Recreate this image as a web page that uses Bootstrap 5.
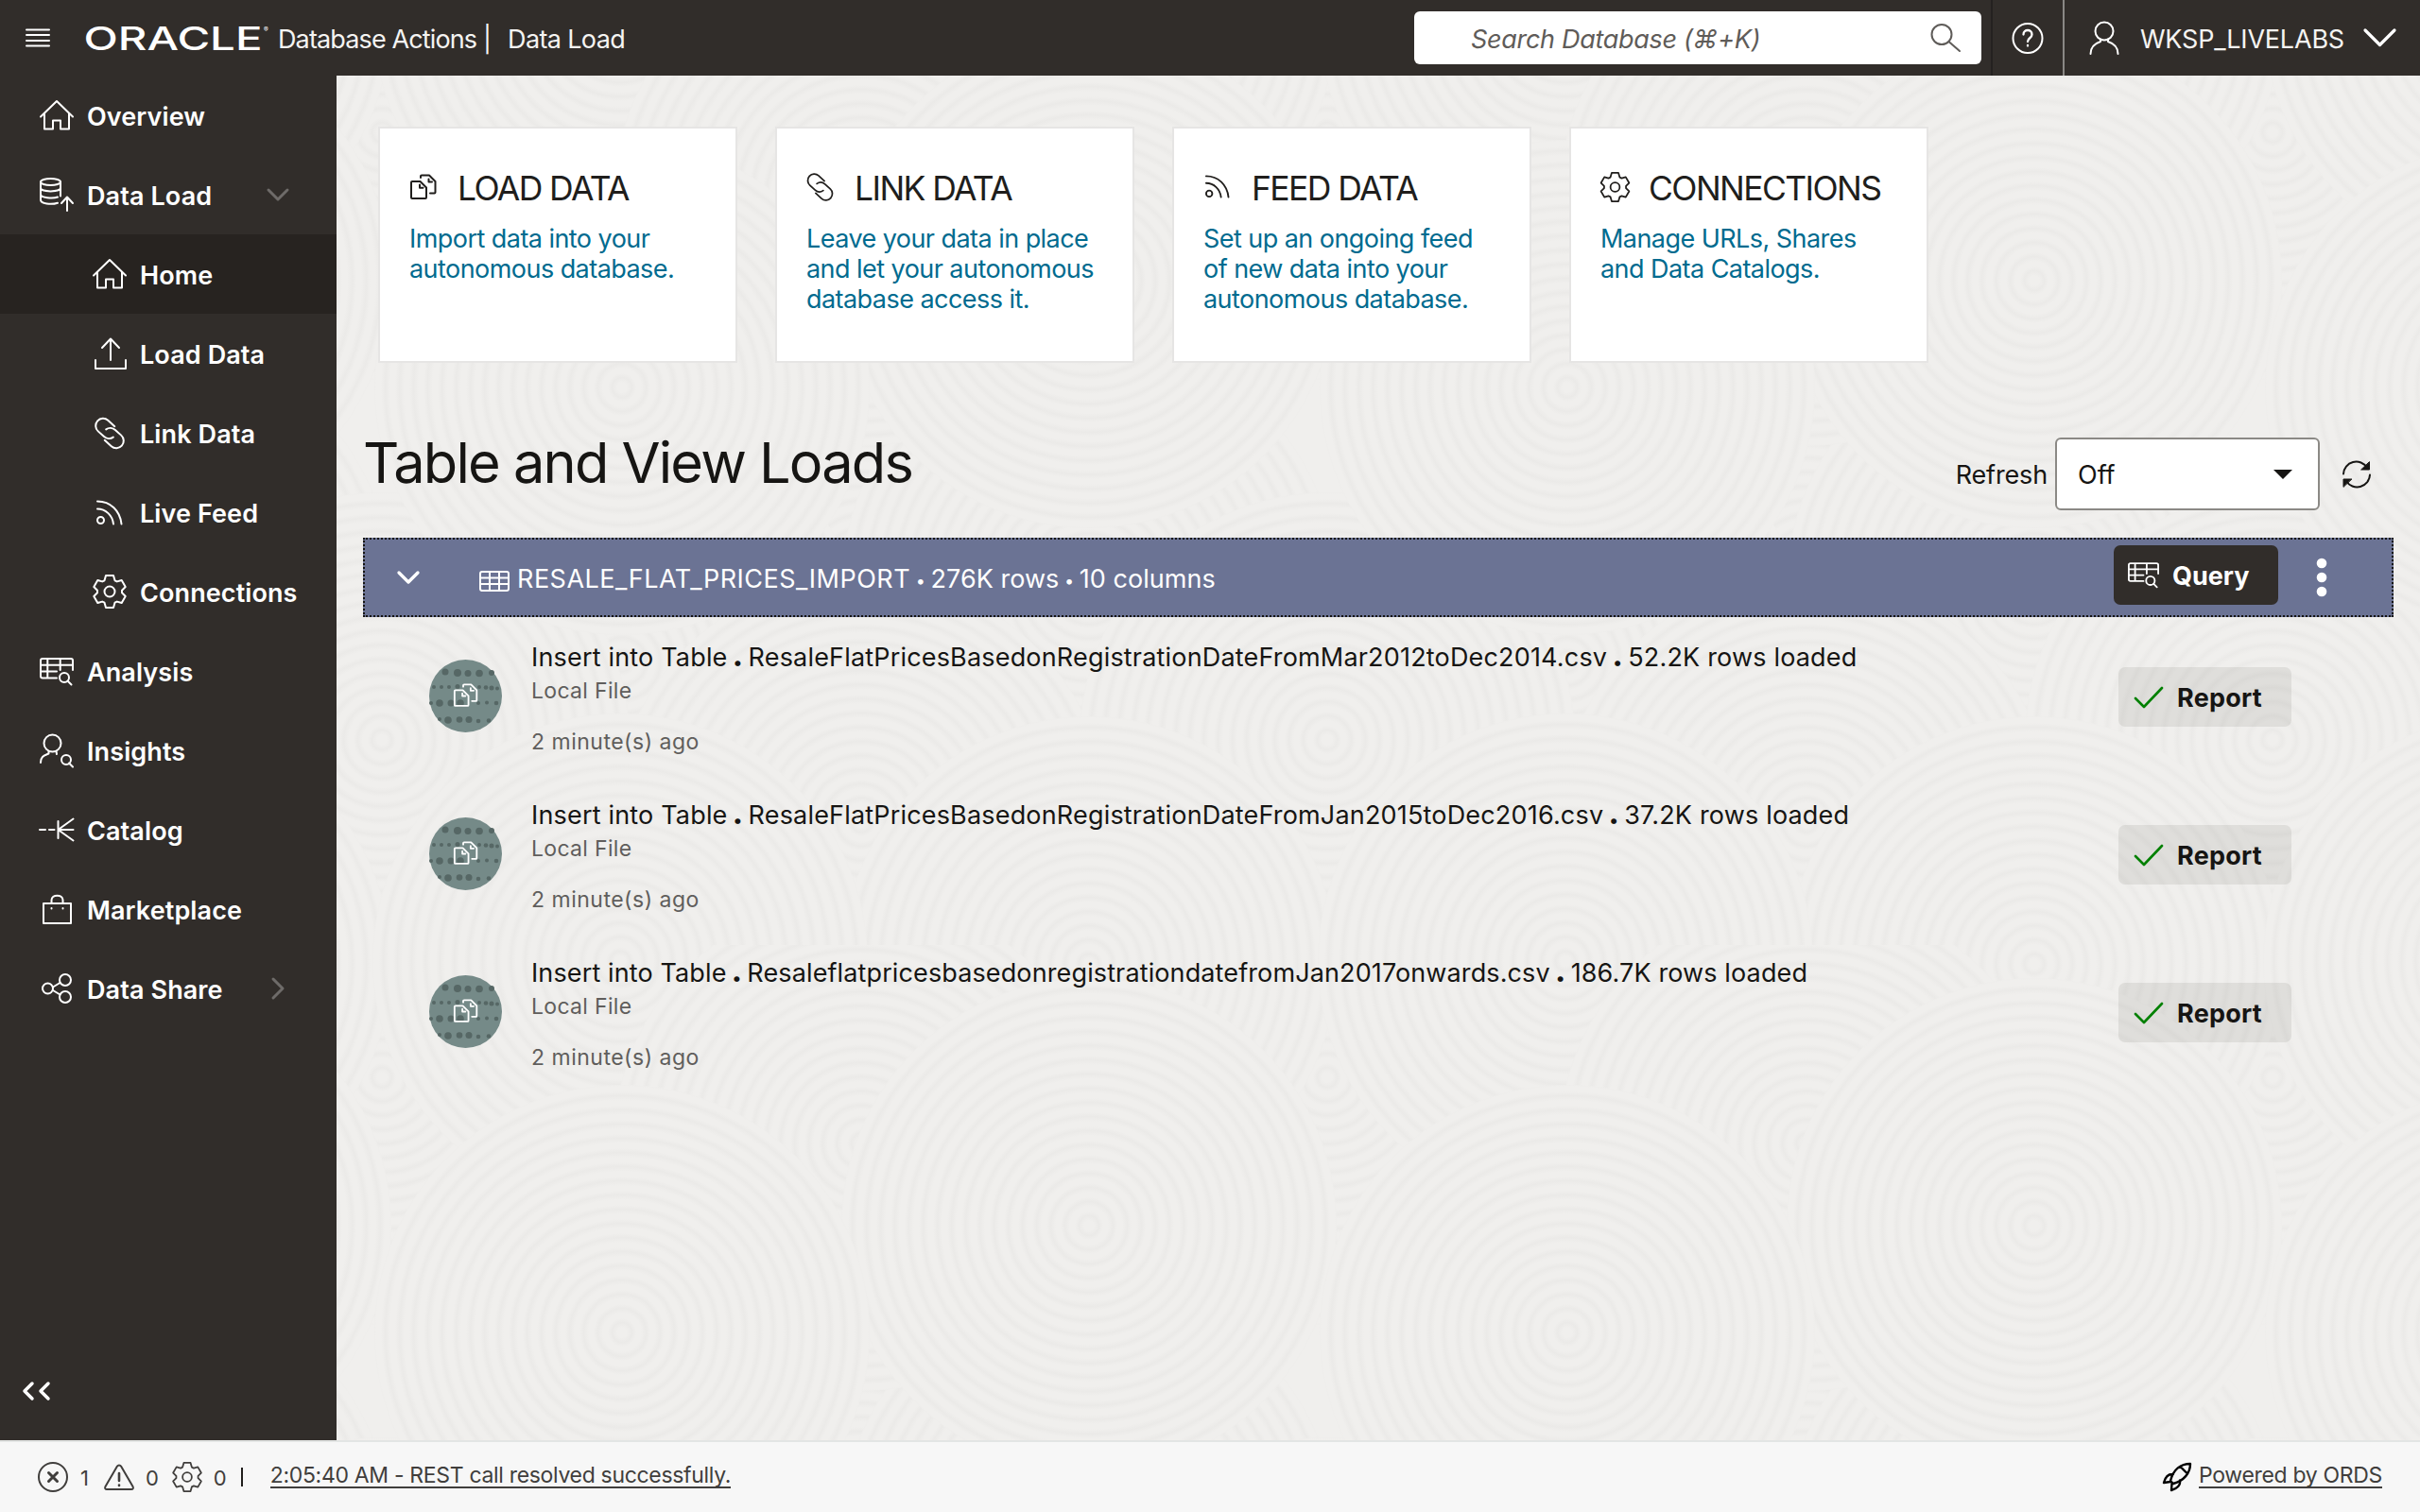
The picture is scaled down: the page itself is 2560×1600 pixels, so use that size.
<!DOCTYPE html>
<html lang="en">
<head>
<meta charset="utf-8">
<title>Oracle Database Actions | Data Load</title>
<link href="https://cdn.jsdelivr.net/npm/bootstrap@5.3.0/dist/css/bootstrap.min.css" rel="stylesheet">
<style>
html,body{height:100%}
body{font-family:Inter,"Noto Sans",sans-serif;font-size:27px;line-height:32px;color:#161513;background:#f0efed;overflow:hidden}
svg.ico{fill:none;stroke:currentColor;stroke-width:2;stroke-linecap:round;stroke-linejoin:round;overflow:visible;flex:none;display:block}
.topbar{height:80px;background:#312d2a;color:#fff;padding-left:28px}
.topbar .t{padding-top:4px;white-space:nowrap;color:#f5f4f2}
.topbar .product{margin-left:38px;letter-spacing:-.87px}
.topbar .section-name{margin-left:18px;letter-spacing:-.64px}
.topbar .user-ico{margin-left:26px}
.topbar .user-name{margin-left:22px;letter-spacing:-.19px}
.topbar .user-chev{margin:0 25px 0 20px}
.wordmark{fill:#fff!important;stroke:none!important}
.searchbox{width:600px;height:56px;border-radius:6px;background:#fff;color:#5f5c59;font-style:italic;padding:0 22px 0 60px;margin-right:10px;letter-spacing:-.3px}
.searchbox span{padding-top:3px}
.helpcell{width:78px;border-left:2px solid #242120;border-right:2px solid #8a8885}
.side{width:356px;background:#312d2a;color:#fff;font-weight:600}
.side a{height:84px;padding-left:42px;color:#fff;text-decoration:none;white-space:nowrap;padding-top:4px}
.side a svg.ico{width:36px;margin-top:-4px}
.side a .t{margin-left:14px;letter-spacing:.1px}
.side a.lvl2{padding-left:98px}
.side a.on{background:#272320}
.side .chev{margin-left:auto;margin-right:50px;color:#6e6b69;width:auto!important}
.side .chev.closed{margin-right:55px}
.side .collapser{height:84px;padding-left:23px;margin-bottom:10px}
.work{background:#f0efed;position:relative;z-index:0}
.swirl{position:absolute;inset:0;width:100%;height:100%;z-index:-1}
.tiles{gap:40px;padding:54px 0 0 44px}
.tile{width:380px;height:250px;border:2px solid #e6e5e4;border-radius:0;background:#fff;padding:45px 0 0 31px}
.tile h2{font-size:35.5px;line-height:38px;font-weight:400;color:#201e1c;margin:0;white-space:nowrap;letter-spacing:-1.6px}
.tile h2 svg{margin-right:22px;margin-top:-5px;width:29px}
.tile p{color:#006b8f;margin:18px 0 0;white-space:nowrap;letter-spacing:-.55px}
.headrow{padding:79px 52px 0 28px;height:185px}
.headrow h1{font-size:59.5px;line-height:64px;font-weight:400;margin:-6px 0 0;white-space:nowrap;letter-spacing:-1.8px}
.pick{width:280px;height:77px;border:2px solid #8b8985;border-radius:6px;background:#fff;padding:0 27px 0 22px;margin:0 24px 0 8px}
.pick span,.headrow .lbl{padding-top:2px}
.headrow .lbl{letter-spacing:-.15px}
.group-bar{height:84px;margin:0 28px;background:#6b7394;border:2px dotted #161513;color:#fff;padding-left:34px}
.group-bar .table-ico{margin:7px 8px 0 63px}
.group-bar .kebab{margin:0 68px 0 40px}
.group-name{padding-top:5px;letter-spacing:.03px}
.group-name b{font-weight:400;letter-spacing:.5px}
.group-name i{font-style:normal;font-size:18px;vertical-align:1px;margin:0 -2px}
.btn-q{width:174px;height:63px;background:#312d2a;color:#fff;border-radius:7px;font-size:27px;font-weight:700;padding:0 0 0 15px;margin-bottom:5px;border:0}
.btn-q svg{margin-right:14px}
.btn-q span{padding-top:3px}
.btn-r span{padding-top:4px}
.btn-r{width:183px;height:63px;background:rgba(22,21,19,.08);color:#161513;border-radius:7px;font-size:27px;font-weight:700;padding:0 0 0 16px;margin:27px 0 0 auto;border:0;letter-spacing:.25px}
.btn-r svg{margin-right:14px}
.btn-r svg.ico{color:#008000}
.loadrow{height:167px;padding:26px 136px 0 98px}
.avatar{width:77px;height:77px;margin:19px 31px 0 0;flex:none}
.loadrow .ln{white-space:nowrap;letter-spacing:.18px;margin-top:1px}
.loadrow .ln.lower{letter-spacing:.12px}
.sub{font-size:23px;color:#605e5c;line-height:28px;letter-spacing:.32px;margin-top:5px}
.sub.when{letter-spacing:.5px;margin-top:26px}
.dotsep{font-weight:800;font-size:32px;line-height:20px;margin:0 -2.500px}
.foot{height:76px;background:#f7f7f7;border-top:2px solid #e3e5e4;color:#403e3c;font-size:22px;padding:0 40px;white-space:nowrap}
.foot .count{margin:2px 14px 0 13px}
.foot .count.first{margin-right:16px}
.foot .count.last{margin:2px 14px 0 12px}
.foot .bar{margin-left:1px;width:2px;height:20px;background:#201e1c}
.foot a{font-size:23px;color:#403e3c;border-bottom:2px solid #403e3c;line-height:23px;text-decoration:none;letter-spacing:-.32px;margin-top:-1px}
.foot .status{margin-left:29px}
.foot .rocket{color:#000;margin-right:8px}
</style>
<script src="https://cdn.jsdelivr.net/npm/bootstrap@5.3.0/dist/js/bootstrap.bundle.min.js"></script>
</head>
<body class="d-flex flex-column">
<svg width="0" height="0" class="position-absolute">
<defs>
<symbol id="house" viewBox="0 0 36 32" overflow="visible"><path d="M1 17.500 18 1l17 16.500M5 14v16.500h9V21.500h8v9h9V14"/></symbol>
<symbol id="files" viewBox="0 0 29 28" overflow="visible"><path d="M3 8h8.500L18 14.500V25a1 1 0 0 1-1 1H3a1 1 0 0 1-1-1V9a1 1 0 0 1 1-1zM11 11.500v3.200h3.500M12 4V2.500a1 1 0 0 1 1-1h8l6.500 6.500v11.500a1 1 0 0 1-1 1H22M20.500 5.500v3H24"/></symbol>
<symbol id="chain" viewBox="0 0 33 31" overflow="visible"><path transform="rotate(42 16.500 15.500)" d="M15.500 6.500h-9.500a7.800 7.800 0 0 0 0 15.600h8.500a7.800 7.800 0 0 0 7.600-6.100M17.500 24.500h9.500a7.800 7.800 0 0 0 0-15.600h-8.500a7.800 7.800 0 0 0-7.600 6.100"/></symbol>
<symbol id="feed" viewBox="0 0 29 27" overflow="visible"><circle cx="5.500" cy="21.500" r="3.500"/><path d="M2 9.500c9 0 16 7 17 16M2 1.500c14 0 24 10 25.500 24"/></symbol>
<symbol id="gear" viewBox="-18 -18 36 36" overflow="visible"><path d="M-5.500-11.700-4-17H4L5.500-11.700 7.800-10.600 12.700-12 16.700-5 13-1.300V1.300L16.700 5 12.700 12 7.800 10.600 5.500 11.700 4 17H-4L-5.500 11.700-7.800 10.600-12.700 12-16.700 5-13 1.300V-1.300L-16.700-5-12.700-12-7.800-10.600z"/><circle r="5.500"/></symbol>
<symbol id="tblfind" viewBox="0 0 36 29" overflow="visible"><path d="M18 21.500H3a2 2 0 0 1-2-2V3a2 2 0 0 1 2-2h30a2 2 0 0 1 2 2v10M1 7.800h34M1 14.600h17M8.300 1v20.500M21.700 1v12M29.500 24.500l4 4"/><circle cx="26" cy="21" r="5"/></symbol>
<radialGradient id="rings" gradientUnits="userSpaceOnUse" cx="0" cy="0" r="15" spreadMethod="repeat"><stop offset="0" stop-color="#f0efed"/><stop offset=".35" stop-color="#f0efed"/><stop offset=".7" stop-color="#ebeae8"/><stop offset="1" stop-color="#f0efed"/></radialGradient>
<symbol id="disc" overflow="visible"><circle r="262" fill="url(#rings)"/></symbol>
<pattern id="swirls" width="1000" height="1000" patternUnits="userSpaceOnUse" x="-356" y="-80">
<rect width="1000" height="1000" fill="#f0efed"/>
<use href="#disc" x="404" y="140"/><use href="#disc" x="404" y="1140"/><use href="#disc" x="911" y="600"/><use href="#disc" x="-89" y="600"/><use href="#disc" x="152" y="620"/><use href="#disc" x="1152" y="620"/><use href="#disc" x="658" y="700"/><use href="#disc" x="911" y="870"/><use href="#disc" x="-89" y="870"/><use href="#disc" x="911" y="-130"/><use href="#disc" x="-89" y="-130"/><use href="#disc" x="404" y="783"/><use href="#disc" x="404" y="-217"/><use href="#disc" x="152" y="20"/><use href="#disc" x="1152" y="20"/><use href="#disc" x="152" y="1020"/><use href="#disc" x="1152" y="1020"/><use href="#disc" x="656" y="17"/><use href="#disc" x="656" y="1017"/><use href="#disc" x="911" y="210"/><use href="#disc" x="-89" y="210"/><use href="#disc" x="152" y="297"/><use href="#disc" x="1152" y="297"/><use href="#disc" x="658" y="410"/>
</pattern>
<symbol id="loadbadge" viewBox="0 0 77 77"><circle cx="38.500" cy="38.500" r="38.500" fill="#758a88"/>
<g fill="#566765" stroke="none"><circle cx="17" cy="13" r="3.500"/><circle cx="30" cy="14" r="4"/><circle cx="41" cy="14.500" r="3.500"/><circle cx="53" cy="14.500" r="3.800"/><circle cx="66" cy="14" r="3"/><circle cx="5" cy="29" r="2"/><circle cx="13" cy="29" r="2"/><circle cx="21" cy="29" r="2"/><circle cx="30" cy="28.500" r="2.500"/><circle cx="53" cy="29" r="2"/><circle cx="60" cy="29.500" r="2.300"/><circle cx="66" cy="30" r="2.500"/><circle cx="72" cy="30.500" r="2"/><circle cx="2" cy="46" r="2"/><circle cx="11" cy="46" r="3.800"/><circle cx="23" cy="46" r="3.500"/><circle cx="33" cy="46" r="3.800"/><circle cx="52" cy="46" r="2"/><circle cx="61" cy="45.500" r="2"/><circle cx="71" cy="46" r="2.300"/><circle cx="11" cy="63" r="2"/><circle cx="20" cy="64" r="3.800"/><circle cx="32" cy="63.500" r="3.300"/><circle cx="42" cy="63.500" r="3.500"/><circle cx="52" cy="65" r="2.300"/><circle cx="63" cy="64.500" r="2.300"/></g>
<g fill="none" stroke="#fff" stroke-width="2" stroke-linejoin="round" stroke-linecap="round" transform="translate(25 25) scale(.92)"><path d="M3 8h8.500L18 14.500V25a1 1 0 0 1-1 1H3a1 1 0 0 1-1-1V9a1 1 0 0 1 1-1zM11 11.500v3.200h3.500M12 4V2.500a1 1 0 0 1 1-1h8l6.500 6.500v11.500a1 1 0 0 1-1 1H22M20.500 5.500v3H24"/></g></symbol>
</defs>
</svg>

<header class="topbar d-flex align-items-center flex-shrink-0">
<svg class="ico" width="24" height="20"><path d="M0 1.500h24M0 7h24M0 13h24M0 18.500h24"/></svg>
<svg class="ico wordmark" width="204" height="80"><g font-family="Inter,sans-serif"><text x="36.500" y="53" font-size="34.500" font-weight="500" textLength="189" lengthAdjust="spacingAndGlyphs">ORACLE</text><text x="227" y="34" font-size="7">®</text></g></svg>
<span class="t product">Database Actions |</span>
<span class="t section-name">Data Load</span>
<div class="searchbox d-flex align-items-center justify-content-between ms-auto"><span>Search Database (⌘+K)</span><svg class="ico" width="32" height="30"><circle cx="12" cy="11.500" r="10.500"/><path d="M19.500 19 31 29"/></svg></div>
<div class="helpcell h-100 d-flex align-items-center justify-content-center"><svg class="ico" width="34" height="34"><circle cx="17" cy="17.500" r="15.500"/><path d="M12.500 13.500c0-6 9-6 9 0 0 4-4.500 3.500-4.500 7.500M17 25v.5" stroke-width="2.300"/></svg></div>
<svg class="ico user-ico" width="32" height="36"><circle cx="16" cy="11" r="9.500"/><path d="M12 19.500v2.500C6 24 1.500 28 1.500 35M20 19.500v2.500c6 2 10.500 6 10.500 13"/></svg>
<span class="t user-name">WKSP_LIVELABS</span>
<svg class="ico user-chev" width="35" height="20"><path stroke-width="3.200" d="M2 2l15.500 15.500L33 2"/></svg>
</header>

<div class="d-flex flex-grow-1" style="min-height:0">
<nav class="side d-flex flex-column flex-shrink-0">
<a href="#" class="d-flex align-items-center"><svg class="ico" height="32"><use href="#house"/></svg><span class="t">Overview</span></a>
<a href="#" class="d-flex align-items-center"><svg class="ico" height="36"><ellipse cx="11.500" cy="4.500" rx="10.500" ry="3.500"/><path d="M1 4.500v19c0 4 11 5.500 18 3.200M22 4.500v15M1 11c0 4.500 21 4.500 21 0M1 17.500c0 4 13 5 18 3M29 35V21M23 27l6-6.500 6 6.500"/></svg><span class="t">Data Load</span><svg class="ico chev" width="24" height="14"><path stroke-width="3" d="M2 2l10 10L22 2"/></svg></a>
<a href="#" class="d-flex align-items-center lvl2 on"><svg class="ico" height="32"><use href="#house"/></svg><span class="t">Home</span></a>
<a href="#" class="d-flex align-items-center lvl2"><svg class="ico" height="34"><path d="M19 24V2M10 11l9-9.500 9 9.500M3 24v9h32v-9"/></svg><span class="t">Load Data</span></a>
<a href="#" class="d-flex align-items-center lvl2"><svg class="ico" height="31"><use href="#chain" width="33" height="31" x="1.500"/></svg><span class="t">Link Data</span></a>
<a href="#" class="d-flex align-items-center lvl2"><svg class="ico" height="27"><use href="#feed" width="29" height="27" x="3"/></svg><span class="t">Live Feed</span></a>
<a href="#" class="d-flex align-items-center lvl2"><svg class="ico" height="36"><use href="#gear"/></svg><span class="t">Connections</span></a>
<a href="#" class="d-flex align-items-center"><svg class="ico" height="29"><use href="#tblfind"/></svg><span class="t">Analysis</span></a>
<a href="#" class="d-flex align-items-center"><svg class="ico" height="36"><circle cx="13.500" cy="10.500" r="9"/><path d="M17.500 19l.500 3M9.500 19v2.500C5 23.500 1 24 1 31M31 31.500l4 4"/><circle cx="28" cy="28" r="5"/></svg><span class="t">Insights</span></a>
<a href="#" class="d-flex align-items-center"><svg class="ico" height="26"><path d="M0 13h6M10 13h5.500M19.500 4v18M19.500 13H35.500M19.500 13 35.500 1.500M19.500 13l16 11.500"/></svg><span class="t">Catalog</span></a>
<a href="#" class="d-flex align-items-center"><svg class="ico" height="32"><path d="M4 10h29v21H4zM12.500 10V6.500c0-6.500 12-6.500 12 0V10M12.500 15v.500M24.500 15v.500"/></svg><span class="t">Marketplace</span></a>
<a href="#" class="d-flex align-items-center"><svg class="ico" height="32"><circle cx="8.500" cy="16" r="5.500"/><circle cx="27" cy="7" r="6"/><circle cx="27" cy="25" r="6"/><path d="M14 14.500l7.500-4.500M14 18l7.500 4.500"/></svg><span class="t">Data Share</span><svg class="ico chev closed" width="14" height="24"><path stroke-width="3" d="M2 2l10 10L2 22"/></svg></a>
<div class="collapser mt-auto d-flex align-items-center"><svg class="ico" width="30" height="20"><path stroke-width="3.500" d="M11 2 3 10l8 8M28 2l-8 8 8 8"/></svg></div>
</nav>

<main class="work flex-grow-1">
<svg class="swirl"><rect width="100%" height="100%" fill="url(#swirls)"/></svg>
<section class="tiles d-flex">
<div class="card tile"><h2 class="d-flex align-items-center"><svg class="ico" height="28"><use href="#files"/></svg><span>LOAD DATA</span></h2><p>Import data into your<br>autonomous database.</p></div>
<div class="card tile"><h2 class="d-flex align-items-center"><svg class="ico" height="28"><use href="#chain"/></svg><span>LINK DATA</span></h2><p>Leave your data in place<br>and let your autonomous<br>database access it.</p></div>
<div class="card tile"><h2 class="d-flex align-items-center"><svg class="ico" height="25"><use href="#feed"/></svg><span>FEED DATA</span></h2><p>Set up an ongoing feed<br>of new data into your<br>autonomous database.</p></div>
<div class="card tile"><h2 class="d-flex align-items-center"><svg class="ico" height="32"><use href="#gear" x="-1" width="33" height="32"/></svg><span>CONNECTIONS</span></h2><p>Manage URLs, Shares<br>and Data Catalogs.</p></div>
</section>
<section class="headrow d-flex align-items-start">
<h1 class="me-auto">Table and View Loads</h1>
<div class="d-flex align-items-center"><span class="lbl">Refresh</span>
<div class="pick d-flex align-items-center justify-content-between"><span>Off</span><svg width="20" height="10"><path d="M0 0h20L10 10z" fill="#161513"/></svg></div>
<svg class="ico" width="30" height="30"><path d="M1 14.500A13.500 13.500 0 0 1 26 8M29 15.500A13.500 13.500 0 0 1 4 22"/><path fill="#161513" stroke-width="1" d="M28.500 2v8H20zM1 28v-8h8.500z"/></svg></div>
</section>
<section class="group-bar d-flex align-items-center">
<svg class="ico" width="24" height="14"><path stroke-width="3.300" d="M2 2l10 10L22 2"/></svg>
<svg class="ico table-ico" width="32" height="22"><rect x="1" y="1" width="30" height="20" rx="2"/><path d="M1 7.500h30M1 14h30M11 1v20M21 1v20"/></svg>
<span class="me-auto group-name"><b>RESALE_FLAT_PRICES_IMPORT</b> <i>•</i> 276K rows <i>•</i> 10 columns</span>
<button class="btn btn-q d-flex align-items-center"><svg class="ico" width="33" height="27"><use href="#tblfind"/></svg><span>Query</span></button>
<svg class="kebab" width="12" height="44" fill="#fff"><circle cx="6" cy="7" r="5.300"/><circle cx="6" cy="22" r="5.300"/><circle cx="6" cy="37" r="5.300"/></svg>
</section>
<article class="loadrow d-flex align-items-start"><svg class="avatar"><use href="#loadbadge"/></svg><div><div class="ln">Insert into Table <span class="dotsep">.</span> ResaleFlatPricesBasedonRegistrationDateFromMar2012toDec2014.csv <span class="dotsep">.</span> 52.2K rows loaded</div><div class="sub">Local File</div><div class="sub when">2 minute(s) ago</div></div>
<button class="btn btn-r d-flex align-items-center"><svg class="ico" width="32" height="24"><path stroke-width="2.600" d="M2 13l9 9L30 2"/></svg><span>Report</span></button></article>
<article class="loadrow d-flex align-items-start"><svg class="avatar"><use href="#loadbadge"/></svg><div><div class="ln">Insert into Table <span class="dotsep">.</span> ResaleFlatPricesBasedonRegistrationDateFromJan2015toDec2016.csv <span class="dotsep">.</span> 37.2K rows loaded</div><div class="sub">Local File</div><div class="sub when">2 minute(s) ago</div></div>
<button class="btn btn-r d-flex align-items-center"><svg class="ico" width="32" height="24"><path stroke-width="2.600" d="M2 13l9 9L30 2"/></svg><span>Report</span></button></article>
<article class="loadrow d-flex align-items-start"><svg class="avatar"><use href="#loadbadge"/></svg><div><div class="ln lower">Insert into Table <span class="dotsep">.</span> ResaleflatpricesbasedonregistrationdatefromJan2017onwards.csv <span class="dotsep">.</span> 186.7K rows loaded</div><div class="sub">Local File</div><div class="sub when">2 minute(s) ago</div></div>
<button class="btn btn-r d-flex align-items-center"><svg class="ico" width="32" height="24"><path stroke-width="2.600" d="M2 13l9 9L30 2"/></svg><span>Report</span></button></article>
</main>
</div>

<footer class="foot d-flex align-items-center flex-shrink-0">
<svg class="ico" width="32" height="32"><circle cx="16" cy="16" r="15"/><path stroke-width="3" d="M11.500 11.500l9 9M20.500 11.500l-9 9"/></svg><span class="count first">1</span>
<svg class="ico" width="32" height="28"><path d="M14 2.500 1.500 24c-1 2 0 3 1.500 3h26c1.500 0 2.500-1 1.500-3L18 2.500c-1-1.500-3-1.500-4 0z"/><path stroke-width="2.600" d="M16 10v8M16 22.500v.500"/></svg><span class="count last">0</span>
<svg class="ico" width="32" height="32"><use href="#gear"/></svg><span class="count last">0</span>
<span class="bar"></span>
<a href="#" class="status">2:05:40 AM - REST call resolved successfully.</a>
<svg class="ico ms-auto rocket" width="30" height="30"><path stroke-width="2.400" d="M29 1C19 1 11 7 8 19l3 3C22 19 29 11 29 1zM18.500 4l7.500 7.500M11 12c-5-.5-8.500 3-10 9l7-1M18 18.500c1 5-3 9-9 10.500l.500-7"/></svg><a href="#">Powered by ORDS</a>
</footer>
</body>
</html>
